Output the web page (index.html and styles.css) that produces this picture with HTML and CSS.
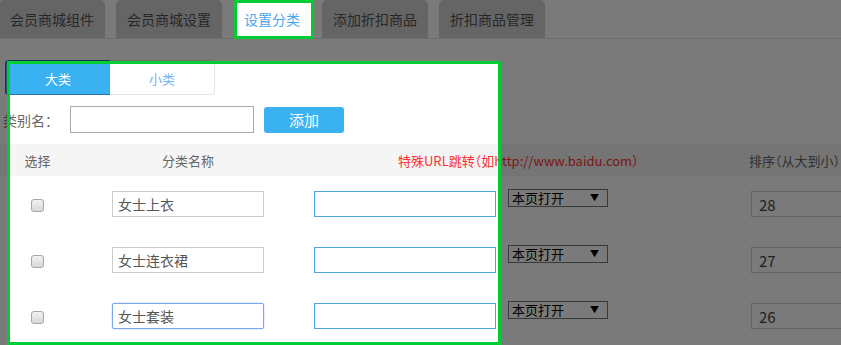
FILE: index.html
```html
<!DOCTYPE html>
<html lang="zh-CN">
<head>
    <meta charset="UTF-8">
    <meta name="viewport" content="width=device-width, initial-scale=1.0">
    <title>设置分类</title>
    <link rel="stylesheet" href="styles.css">
</head>
<body>

<!-- Top tabs -->
<div class="tabs">
    <a href="#" class="tab">会员商城组件</a>
    <a href="#" class="tab">会员商城设置</a>
    <a href="#" class="tab active">设置分类</a>
    <a href="#" class="tab">添加折扣商品</a>
    <a href="#" class="tab">折扣商品管理</a>
</div>

<div class="main">
    <!-- 大类 / 小类 switch -->
    <div class="seg">
        <span class="seg-item on">大类</span>
        <span class="seg-item">小类</span>
    </div>

    <!-- Add category -->
    <div class="add-row">
        <label for="catName">类别名：</label>
        <input type="text" id="catName" class="add-input">
        <button type="button" class="btn-add">添加</button>
    </div>

    <!-- Category list -->
    <div class="list">
        <div class="row head">
            <span class="col-check">选择</span>
            <span class="col-name">分类名称</span>
            <span class="col-url">特殊URL跳转（如http://www.baidu.com）</span>
            <span class="col-sort">排序（从大到小）</span>
        </div>

        <div class="row">
            <span class="col-check"><input type="checkbox" class="chk"></span>
            <span class="col-name"><input type="text" class="name-input" value="女士上衣"></span>
            <span class="col-link"><input type="text" class="url-input"></span>
            <span class="col-open">
                <span class="select-wrap"><select class="open-select"><option>本页打开</option><option>新页打开</option></select></span>
            </span>
            <span class="col-sort"><input type="text" class="sort-input" value="28"></span>
        </div>

        <div class="row">
            <span class="col-check"><input type="checkbox" class="chk"></span>
            <span class="col-name"><input type="text" class="name-input" value="女士连衣裙"></span>
            <span class="col-link"><input type="text" class="url-input"></span>
            <span class="col-open">
                <span class="select-wrap"><select class="open-select"><option>本页打开</option><option>新页打开</option></select></span>
            </span>
            <span class="col-sort"><input type="text" class="sort-input" value="27"></span>
        </div>

        <div class="row">
            <span class="col-check"><input type="checkbox" class="chk"></span>
            <span class="col-name"><input type="text" class="name-input focused" value="女士套装"></span>
            <span class="col-link"><input type="text" class="url-input"></span>
            <span class="col-open">
                <span class="select-wrap"><select class="open-select"><option>本页打开</option><option>新页打开</option></select></span>
            </span>
            <span class="col-sort"><input type="text" class="sort-input" value="26"></span>
        </div>
    </div>
</div>

<!-- Guide overlay: dims the page except the highlighted parts -->
<div class="mask"></div>
<div class="hl hl-tab"></div>
<div class="hl hl-panel"></div>

</body>
</html>
```

FILE: styles.css
```css
/* Basic Reset */
* {
    box-sizing: border-box;
    margin: 0;
    padding: 0;
}

body {
    font-family: "Microsoft YaHei", "Noto Sans CJK SC", sans-serif;
    background-color: #fff;
    color: #666;
    overflow: hidden;
    width: 841px;
    height: 345px;
}

input, select, button {
    font-family: inherit;
    outline: none;
}

/* Top tabs */
.tabs {
    display: flex;
    gap: 11px;
    height: 39px;
    border-bottom: 1px solid #e4e4e4;
    margin-left: -1px;
}

.tab {
    display: block;
    padding: 0 11px;
    height: 38px;
    line-height: 38px;
    font-size: 14px;
    color: #555;
    text-decoration: none;
    background-color: #d4d4d4;
    border-radius: 5px 5px 0 0;
    white-space: nowrap;
}

.tab.active {
    background-color: #fff;
    color: #4aa6ee;
}

/* Main area */
.main {
    padding-top: 21px;
}

.seg {
    display: flex;
    margin-left: 5px;
    width: 210px;
}

.seg-item {
    width: 105px;
    height: 35px;
    line-height: 35px;
    text-align: center;
    font-size: 13px;
    color: #6fb4f3;
    background-color: #fff;
    border: 1px solid #e6e6e6;
    border-left: none;
    border-radius: 0 4px 4px 0;
}

.seg-item.on {
    background-color: #3ab1f1;
    color: #fff;
    border: 1px solid #2a6fb0;
    border-right: none;
    border-radius: 4px 0 0 4px;
}

/* Add row */
.add-row {
    display: flex;
    align-items: center;
    margin-top: 11px;
    padding-left: 3px;
}

.add-row label {
    font-size: 14px;
    color: #666;
    width: 67px;
    white-space: nowrap;
}

.add-input {
    width: 184px;
    height: 27px;
    border: 1px solid #aaa;
}

.btn-add {
    margin-left: 10px;
    width: 80px;
    height: 26px;
    border: none;
    border-radius: 3px;
    background-color: #3ab1f1;
    color: #fff;
    font-size: 15px;
}

/* List */
.list {
    margin-top: 11px;
}

.row {
    display: grid;
    grid-template-columns: 75px 226px 195px 245px 200px;
    align-items: center;
    height: 56px;
}

.row.head {
    height: 32px;
    background-color: #f5f5f5;
    font-size: 13px;
    color: #666;
    white-space: nowrap;
    font-feature-settings: "halt";
}

.col-check,
.col-name {
    text-align: center;
}

.head .col-url {
    grid-column: 3 / span 2;
    padding-left: 97px;
    color: #ff3030;
}

.head .col-sort {
    padding-left: 8px;
}

.chk {
    appearance: none;
    display: inline-block;
    vertical-align: middle;
    width: 13px;
    height: 13px;
    margin-top: -3px;
    border: 1px solid #a5a5a5;
    border-radius: 3px;
    background: linear-gradient(#f2f2f2, #d9d9d9);
}

.name-input {
    display: block;
    margin: 0 auto;
    width: 152px;
    height: 26px;
    padding: 0 5px;
    font-size: 14px;
    color: #555;
    border: 1px solid #ccc;
}

.name-input.focused {
    border-color: #7ca6ee;
    border-radius: 2px;
    box-shadow: 0 0 2px #a9c6f6;
}

.url-input {
    display: block;
    margin-left: 13px;
    width: 182px;
    height: 26px;
    border: 1px solid #4fa6dd;
}

.col-open {
    align-self: start;
    padding-top: 13px;
}

.select-wrap {
    position: relative;
    display: block;
    margin-left: 12px;
    width: 100px;
}

.select-wrap::after {
    content: "▼";
    position: absolute;
    right: 9px;
    top: 2px;
    font-size: 9px;
    line-height: 14px;
    color: #000;
    pointer-events: none;
}

.open-select {
    appearance: none;
    display: block;
    width: 100px;
    height: 18px;
    padding: 0 3px;
    font-size: 13px;
    line-height: 16px;
    color: #000;
    background-color: #fff;
    border: 1px solid #777;
    border-radius: 0;
}

.sort-input {
    display: block;
    margin-left: 10px;
    width: 160px;
    height: 26px;
    padding: 0 7px;
    font-size: 15px;
    color: #444;
    border: 1px solid #ccc;
}

/* Guide overlay */
.mask {
    position: fixed;
    inset: 0;
    background-color: rgba(0, 0, 0, 0.52);
    clip-path: path(evenodd, "M0 0H841V345H0Z M234 0H314V39H234Z M7 61H501V345H7Z");
}

.hl {
    position: fixed;
    border: 3px solid #00cc33;
}

.hl-tab {
    left: 234px;
    top: 0;
    width: 80px;
    height: 39px;
}

.hl-panel {
    left: 7px;
    top: 61px;
    width: 494px;
    height: 284px;
}
```
